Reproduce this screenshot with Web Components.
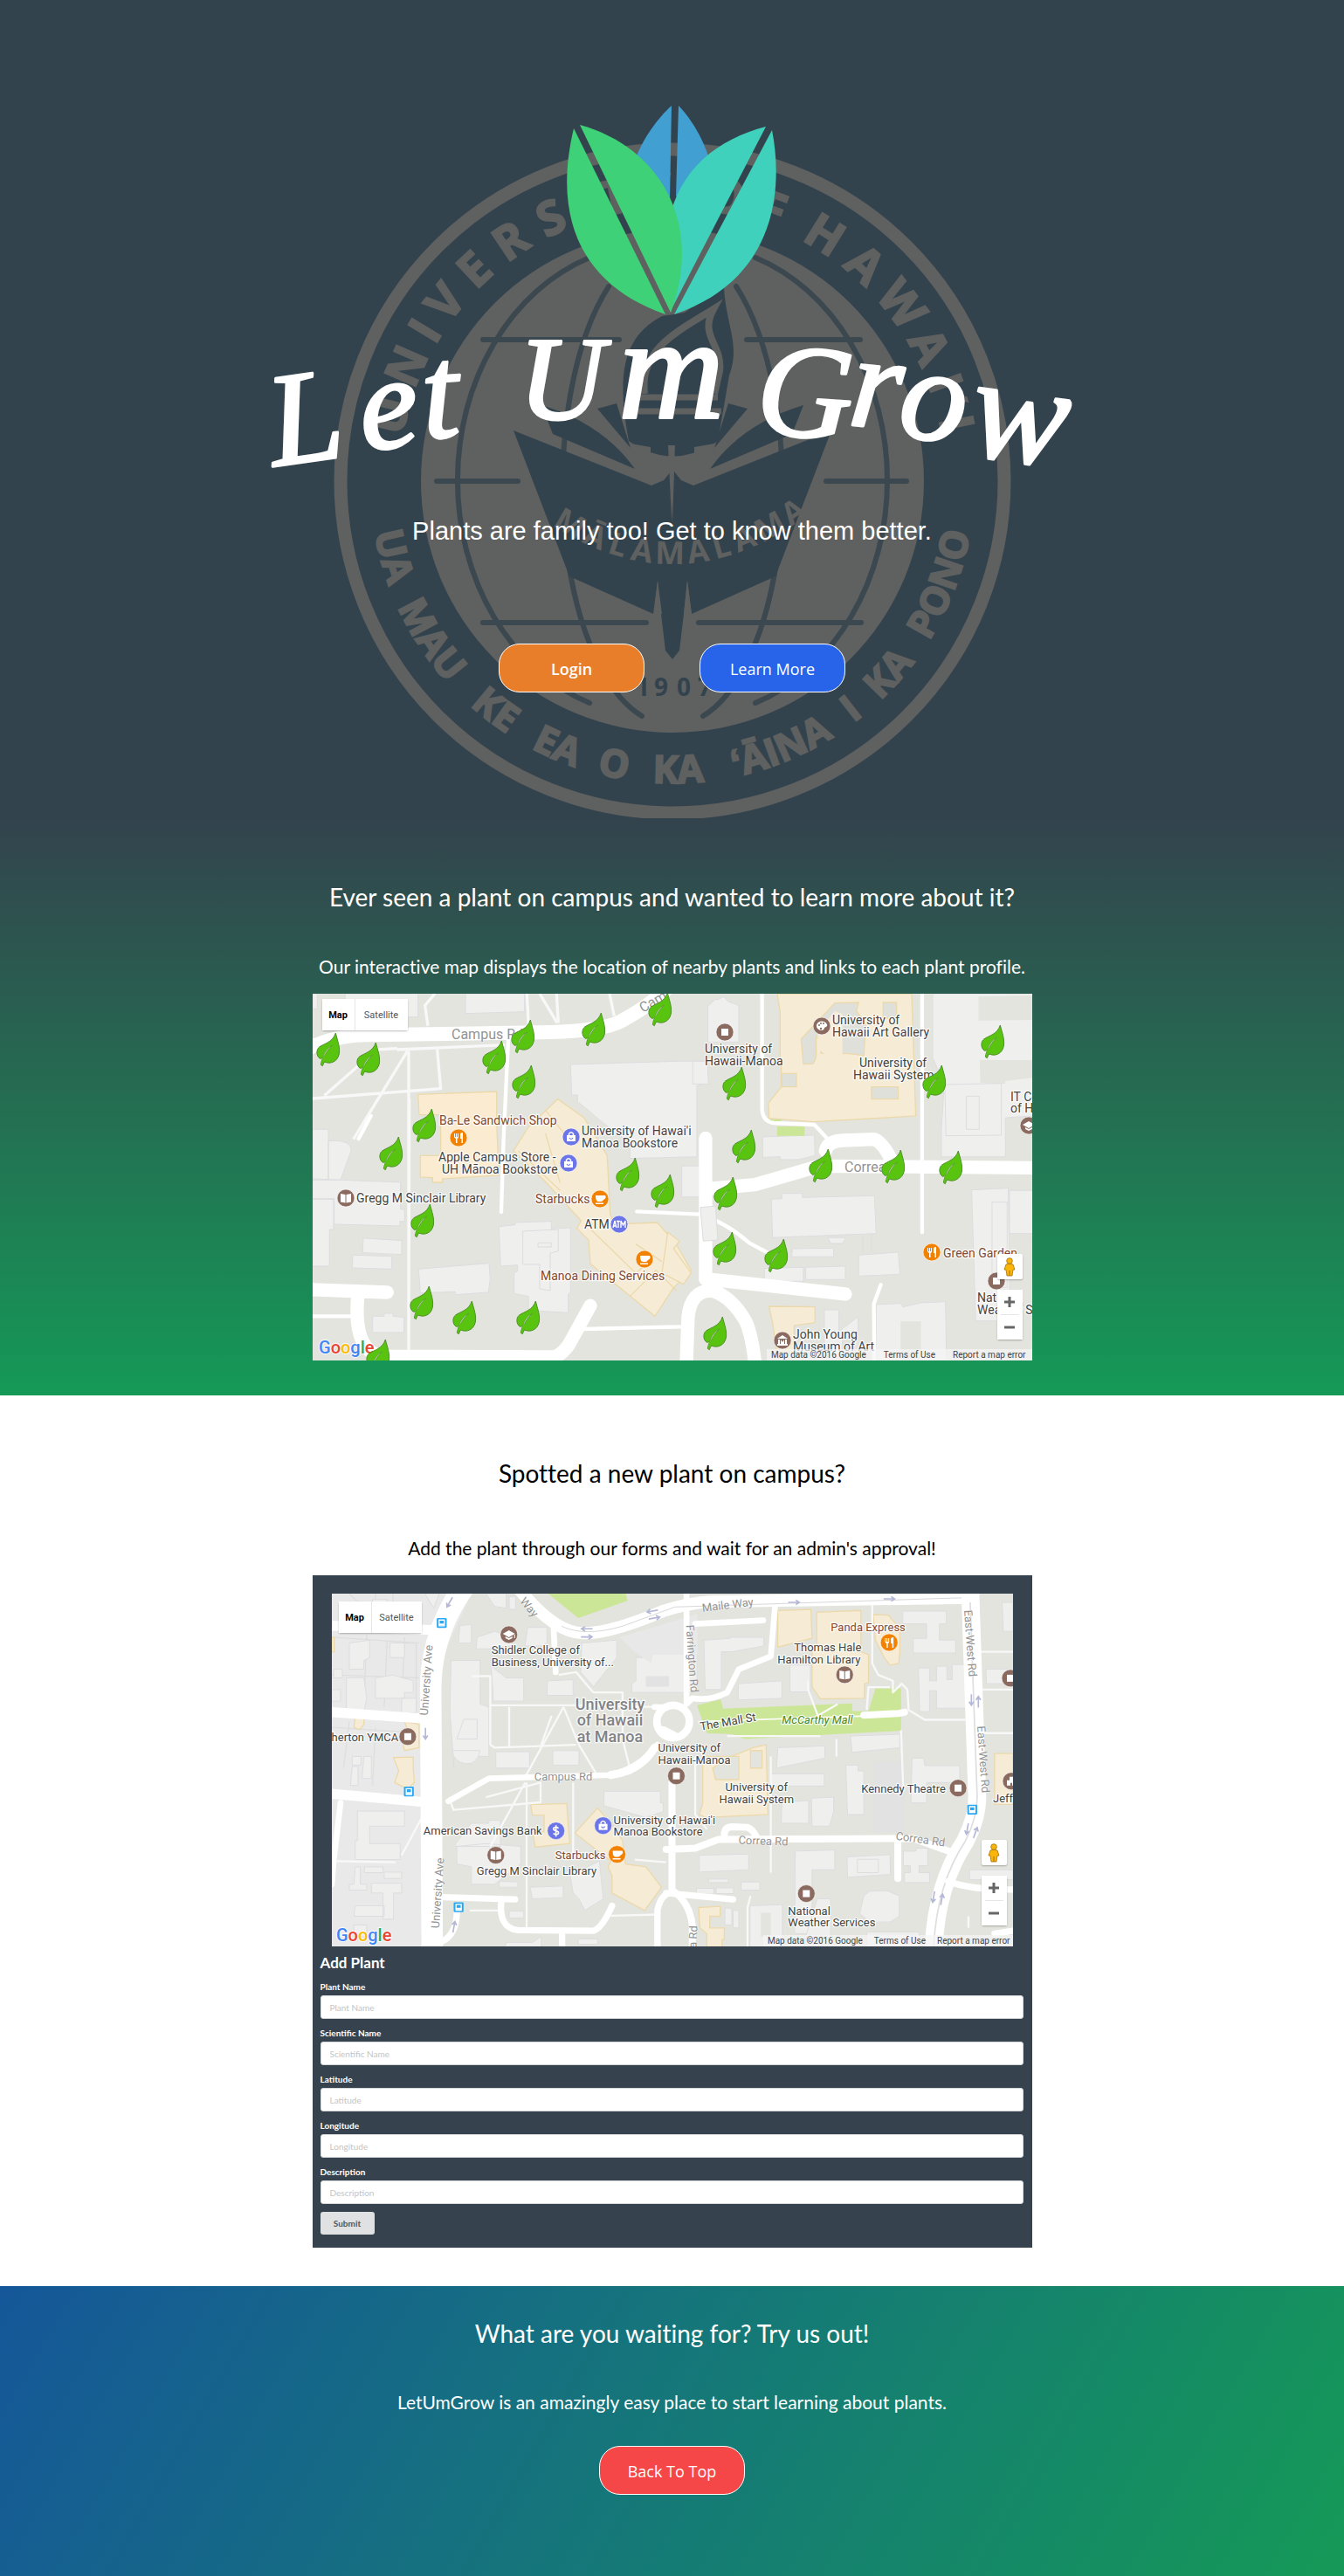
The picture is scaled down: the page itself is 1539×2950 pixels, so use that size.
<!DOCTYPE html>
<html lang="en">
<head>
<meta charset="utf-8">
<meta name="viewport" content="width=device-width, initial-scale=1">
<title>Let Um Grow</title>
<style>
  html { scroll-behavior: smooth; }
  body { margin: 0; font-family: Lato, sans-serif; background: #fff; }
</style>
</head>
<body>
<lug-hero id="top">
  <lug-seal slot="seal"></lug-seal>
  <lug-logo slot="logo"></lug-logo>
  <span slot="tagline">Plants are family too! Get to know them better.</span>
  <lug-button slot="actions" tone="orange" href="#login" strong>Login</lug-button>
  <lug-button slot="actions" tone="blue" href="#more">Learn More</lug-button>
</lug-hero>

<lug-band tone="fade" id="more">
  <span slot="title">Ever seen a plant on campus and wanted to learn more about it?</span>
  <span slot="lead">Our interactive map displays the location of nearby plants and links to each plant profile.</span>
  <plant-map></plant-map>
</lug-band>

<lug-band tone="plain">
  <span slot="title">Spotted a new plant on campus?</span>
  <span slot="lead">Add the plant through our forms and wait for an admin's approval!</span>
  <plant-form></plant-form>
</lug-band>

<lug-band tone="deep">
  <span slot="title">What are you waiting for? Try us out!</span>
  <span slot="lead">LetUmGrow is an amazingly easy place to start learning about plants.</span>
  <lug-button tone="red" href="#top">Back To Top</lug-button>
</lug-band>

<script>
class LugElement extends HTMLElement {
  constructor() {
    super();
    this.attachShadow({ mode: 'open' });
  }
  connectedCallback() {
    this.shadowRoot.innerHTML = this.render();
  }
}

/* Hero: the seal and the content share one grid cell */
customElements.define('lug-hero', class extends LugElement {
  render() {
    return `
    <style>
      :host { display: grid; justify-items: center; background: #33434d; color: #fff; overflow: hidden; }
      .seal, .content { grid-area: 1 / 1; }
      .seal { padding-top: 163px; }
      .content { display: flex; flex-direction: column; align-items: center; padding: 110px 0 144px; }
      h1 { margin: 0; }
      p { margin: 40px 0 111px; font: 29px/36px "Liberation Sans", Arial, sans-serif; text-align: center; }
      .actions { display: flex; gap: 63px; }
    </style>
    <div class="seal"><slot name="seal"></slot></div>
    <div class="content">
      <h1><slot name="logo"></slot></h1>
      <p><slot name="tagline"></slot></p>
      <div class="actions"><slot name="actions"></slot></div>
    </div>`;
  }
});

/* University seal */
customElements.define('lug-seal', class extends LugElement {
  render() {
    const top = [['U',-76.7],['N',-66.5],['I',-58.6],['V',-51.7],['E',-43],['R',-33.8],['S',-24.6],['I',-18],['T',-11.5],['Y',-3],['O',11],['F',20.5],['H',32],['A',42],['W',52.6],['A',62.7],['I',70.5],['ʻ',74.5],['I',78.8]];
    const bottom = [['UA',-75],['MAU',-56.7],['KE',-37.7],['EA',-23.5],['O',-11.7],['KA',1],['ʻĀINA',22],['I',38],['KA',48.3],['PONO',69]];
    const upper = top.map(([t, a]) => `<tspan x="${Math.round((a + 90) * 5.45)}">${t}</tspan>`).join('');
    const lower = bottom.map(([t, a]) => `<tspan x="${Math.round((a + 90) * 6.039)}">${t}</tspan>`).join('');
    const book = `
      <path d="M588 493 L652 660 L748 703 L753 665 L757 703 L762 745 L770 755 V600 L768 540 L760 550 L746 556 Z"/>
      <path d="M620 464 Q690 485 727 537 L633 497Z M684 468 L706 462 L722 513Z"/>`;
    return `
    <style>
      :host { display: block; }
      svg { display: block; width: 776px; max-width: 100vw; height: auto; }
      text { font-family: "Open Sans", sans-serif; font-weight: 700; text-anchor: middle; }
      .ring { fill: #5f6060; stroke: #5f6060; stroke-width: 2; }
    </style>
    <svg viewBox="382 163 776 774" aria-hidden="true">
      <defs>
        <path id="up" d="M457 551 A313 313 0 0 1 1083 551"/>
        <path id="down" d="M424 551 A346 346 0 0 0 1116 551"/>
        <path id="ribbon" d="M618 592 Q770 700 922 592"/>
      </defs>
      <circle cx="770" cy="551" r="380" fill="none" stroke="#5f6060" stroke-width="15"/>
      <circle cx="770" cy="551" r="288" fill="#5f6060"/>
      <g fill="none" stroke="#3b484f" stroke-width="6" stroke-linecap="round">
        <path d="M675 295 A225 270 0 0 0 675 805 M865 295 A225 270 0 0 1 865 805"/>
        <path d="M697 328 A122 275 0 0 0 735 820 M843 328 A122 275 0 0 1 805 820"/>
        <path d="M553 389 H709 M855 389 H985 M500 551 H593 M946 551 H1038 M553 713 H740 M800 713 H986"/>
      </g>
      <g fill="#33434d">
        <path d="M758 362 C715 385 705 425 720 505 Q770 540 822 505 L835 430 C848 395 832 375 829 330 Q800 345 784 358Z"/>
        ${book}
        <g transform="translate(1540 0) scale(-1 1)">${book}</g>
      </g>
      <path d="M738 451 C732 400 775 380 817 354 C800 385 828 395 824 425 L818 451" fill="none" stroke="#5f6060" stroke-width="8"/>
      <path d="M730 455 H822 M722 471 H826" stroke="#5f6060" stroke-width="7"/>
      <path d="M716 478 H824 Q810 505 770 507 Q730 505 716 478Z" fill="#33434d"/>
      <path d="M727 540 L745 553 V512 L722 508Z M813 540 L795 553 V512 L818 508Z" fill="#5f6060"/>
      <path d="M765 510 L769 595 L773 510Z" fill="#5f6060"/>
      <path d="M753 665 L749 703 H758Z M787 665 L783 703 H792Z" fill="#5f6060"/>
      <text class="ring" font-size="54"><textPath href="#up">${upper}</textPath></text>
      <text class="ring" font-size="44"><textPath href="#down">${lower}</textPath></text>
      <text font-size="36" fill="#5f6060"><textPath href="#ribbon"><tspan x="34 68 97 127 161 195 224 253 287 320">MĀLAMALAMA</tspan></textPath></text>
      <text x="736 757 783 807" y="797" font-size="28" fill="#33434d">1907</text>
    </svg>`;
  }
});

/* Leaf mark and lettering */
customElements.define('lug-logo', class extends LugElement {
  render() {
    return `
    <style>
      :host { display: block; }
      svg { display: block; width: 940px; max-width: 100vw; height: auto; }
      text { font: italic 400 152px "Liberation Serif", serif; fill: #fff; stroke: #fff; stroke-width: 3; stroke-linejoin: round; }
      .small { font-size: 136px; }
      .large { font-size: 168px; }
    </style>
    <svg viewBox="300 110 940 440" role="img" aria-label="Let Um Grow">
      <g fill="#419fd1">
        <path d="M769 121 C745 143 722 180 718 220 L767 230Z"/>
        <path d="M777 121 C800 145 811 175 816 195 L774 225Z"/>
      </g>
      <g fill="#3fd1bb">
        <path d="M877 145 C800 165 740 225 770 352Z"/>
        <path d="M884 149 C897 215 890 320 772 360Z"/>
      </g>
      <g fill="#3fd178">
        <path d="M664 143 C760 170 805 260 768 358Z"/>
        <path d="M657 147 C630 260 675 330 762 360Z"/>
      </g>
      <text x="314 416 486" y="534 516 502" rotate="-8 -6 -4">Let</text>
      <text x="594 708" y="480 478"><tspan class="small">U</tspan><tspan class="large">m</tspan></text>
      <text x="864 970 1026 1106" y="496 486 498 520" rotate="4 6 8 8">Gro<tspan class="large">w</tspan></text>
    </svg>`;
  }
});

customElements.define('lug-button', class extends LugElement {
  render() {
    return `
    <style>
      :host { display: inline-block; }
      a { display: block; box-sizing: border-box; width: 167px; height: 56px; padding-top: 2px; border: 1px solid #fff;
          border-radius: 24px; color: #fff; text-align: center; text-decoration: none;
          font: 18px/52px "Open Sans", sans-serif; }
      :host([strong]) a { font-weight: 600; }
      :host([tone="orange"]) a { background: #e87e29; }
      :host([tone="blue"]) a { background: #2764ea; }
      :host([tone="red"]) a { background: #f54748; }
    </style>
    <a href="${this.getAttribute('href')}"><slot></slot></a>`;
  }
});

/* Full-width band with a centred column */
customElements.define('lug-band', class extends LugElement {
  render() {
    return `
    <style>
      :host { display: flex; flex-direction: column; align-items: center; text-align: center; font-variant-ligatures: none; }
      :host([tone="fade"]) { --gap: 48px; padding: 72px 16px 40px; color: #fff; background: linear-gradient(#33434d, #159957); }
      :host([tone="plain"]) { --gap: 54px; padding: 71px 16px 44px; color: #000; background: #fff; }
      :host([tone="deep"]) { --gap: 47px; --after: 36px; padding: 36px 16px 93px; color: #fff; background: linear-gradient(120deg, #155799, #159957); }
      h2 { margin: 0; font-weight: 400; font-size: 28px; line-height: 36px; }
      p { margin: var(--gap) 0 var(--after, 17px); font-size: 21px; line-height: 28px; }
      .body { width: 100%; max-width: 824px; }
    </style>
    <h2><slot name="title"></slot></h2>
    <p><slot name="lead"></slot></p>
    <div class="body"><slot></slot></div>`;
  }
});

/* Map frame: drawing in the slot, controls over it */
customElements.define('map-frame', class extends LugElement {
  render() {
    return `
    <style>
      :host { display: block; position: relative; overflow: hidden; background: #e3e4dd; font-family: Roboto, sans-serif; text-align: left; }
      button { border: 0; padding: 0; background: #fff; font-family: inherit; cursor: pointer; color: #565656; }
      .types, .side { position: absolute; display: flex; }
      .types { left: var(--tx, 11px); top: var(--ty, 6px); height: 36px; border-radius: 2px; box-shadow: 0 1px 2px #0004; }
      .types button { width: var(--tw, 60px); font-size: 11px; }
      .types button:first-child { width: 38px; font-weight: 700; color: #000; border-right: 1px solid #e6e6e6; }
      .side { right: var(--sx, 11px); bottom: 24px; flex-direction: column; gap: 12px; }
      .side > * { width: 29px; border-radius: 2px; box-shadow: 0 1px 2px #0004; }
      .peg { height: 29px; display: grid; place-items: center; }
      .zoom { display: flex; flex-direction: column; background: #fff; }
      .zoom button { height: 28px; display: grid; place-items: center; }
      .zoom hr { margin: 0 4px; width: auto; border: 0; border-top: 1px solid #e6e6e6; }
      footer { position: absolute; right: 0; bottom: 0; display: flex; gap: var(--fg, 20px); padding: 0 var(--fp, 7px) 0 5px; height: 13px;
               background: #f5f5f5b3; font-size: 10px; line-height: 13px; color: #444; }
      a { color: inherit; text-decoration: none; }
    </style>
    <slot></slot>
    <div class="types"><button type="button">Map</button><button type="button">Satellite</button></div>
    <div class="side">
      <button class="peg" type="button" aria-label="Street View">
        <svg width="14" height="22" viewBox="0 0 14 22"><g fill="#f9b509" stroke="#a87108" stroke-width=".8"><path d="M3 8 Q7 6.500 11 8 L13 14 H11 L10 21 H4 L3 14 H1Z"/><circle cx="7" cy="4" r="3.300"/></g><path d="M7 15 V21" stroke="#a87108"/></svg>
      </button>
      <div class="zoom">
        <button type="button" aria-label="Zoom in"><svg width="12" height="12"><path d="M0 6H12M6 0V12" stroke="#666" stroke-width="3"/></svg></button>
        <hr>
        <button type="button" aria-label="Zoom out"><svg width="12" height="12"><path d="M0 6H12" stroke="#666" stroke-width="3"/></svg></button>
      </div>
    </div>
    <footer><span>Map data ©2016 Google</span><a href="#">Terms of Use</a><a href="#">Report a map error</a></footer>`;
  }
});

const MAP_STYLE = `
  :host { display: block; }
  svg { display: block; width: 100%; height: auto; font-family: Roboto, sans-serif; }
  text { paint-order: stroke; stroke: #ffffffd0; stroke-width: 2.5px; stroke-linejoin: round; font-size: var(--label, 14px); fill: #444; }
  .food { fill: #84492f; }
  .road { fill: #939393; font-size: var(--road, 16px); stroke-width: 1px; }
  .place { fill: #7f8388; font-size: 18px; font-weight: 500; }
  .park { fill: #4c8a1c; font-style: italic; }
  .r { fill: none; stroke: #fff; stroke-linejoin: round; stroke-linecap: round; }
  .t { fill: none; stroke: #f8f8f8; stroke-width: 10; stroke-linejoin: round; }
  .b { fill: #efefee; stroke: #dddde0; stroke-width: 3; }
  .y { fill: #f6ecd6; stroke: #ecd9ab; stroke-width: 4; }
  .g { fill: #cbe697; }
  .google { font-size: 20px; font-weight: 500; stroke-width: 2px; }`;

const GLYPHS = {
  dot: ['#8b6a60', '<rect x="-4" y="-4" width="8" height="8" fill="#fff"/>'],
  book: ['#8b6a60', '<path d="M-6-5 L-.500-4 V5.500 L-6 4.500Z M6-5 L.500-4 V5.500 L6 4.500Z" fill="#fff"/>'],
  art: ['#8b6a60', '<path d="M-6 1 C-7-6 3-8 6-2 C7 1 4 1 3 2 C3 6-4 6-6 1Z" fill="#fff"/><g fill="#8b6a60"><circle cx="-3" cy="-1" r="1"/><circle cx="-1" cy="-3" r="1"/><circle cx="2" cy="-3" r="1"/><circle cx="-1" cy="3" r="1.200"/></g>'],
  school: ['#8b6a60', '<path d="M-7-1 L0-5 L7-1 L0 3Z M-4 2 L0 4 L4 2 V4 L0 6 L-4 4Z M6 0V4H7V0Z" fill="#fff"/>'],
  museum: ['#8b6a60', '<path d="M-6-2 L0-6 L6-2Z M-6 4H6V6H-6Z M-5-1H-3V4H-5Z M3-1H5V4H3Z M-2 4V-1L0 2L2-1V4" fill="#fff"/>'],
  castle: ['#8b6a60', '<path d="M-5 5V-1H-2V-5H2V-3H5V5H1V2H-1V5Z" fill="#fff"/>'],
  food: ['#f28100', '<path d="M-5-5V-1Q-4 1-3 1V6H-1.500V1Q0 1 0-1V-5H-1V-1H-2V-5H-3V-1H-4V-5Z M2-4Q2-6 5-6V6H3.500V1H2Z" fill="#fff"/>'],
  cup: ['#f28100', '<path d="M-5-4H6Q8-1 4 1Q3 3 1 3H-2Q-5 3-5-4Z M-5 4.500H4V6H-5Z" fill="#fff"/>'],
  shop: ['#6b75e8', '<path d="M-5-2H5V5H-5Z" fill="#fff"/><path d="M-2.500-2V-3.500Q0-7 2.500-3.500V-2" fill="none" stroke="#fff" stroke-width="1.500"/><path d="M-2 1Q0 4 2 1" fill="none" stroke="#6b75e8" stroke-width="1.200"/>'],
  atm: ['#6b75e8', '<path d="M-7 4L-5-4L-3 4M-6.500 2H-3.500M-3-3.500H1M-1-4V4M2 4V-4L4.500 1L7-4V4" fill="none" stroke="#fff" stroke-width="1.400"/>'],
  bank: ['#6b75e8', '<path d="M3-3Q0-5-2.500-3.500Q-4-1 0 0Q4 1 2.500 3.500Q0 5-3 3M0-6.500V6.500" fill="none" stroke="#fff" stroke-width="1.700"/>']
};
const px = n => Math.round(n / 3);
/* Both maps are charted on a grid of three units to a pixel */
const poi = ([kind, x, y]) => `<g transform="translate(${px(x)} ${px(y)})"><circle r="10" fill="${GLYPHS[kind][0]}" stroke="#ffffff90"/>${GLYPHS[kind][1]}</g>`;
const label = ([text, x, y, kind = '', turn = 0]) => `<text class="${kind}" transform="translate(${px(x)} ${px(y)}) rotate(${turn})">${text}</text>`;
const google = (x, y) => `<text class="google" x="${x}" y="${y}"><tspan fill="#4285f4">G</tspan><tspan fill="#ea4335">o</tspan><tspan fill="#fbbc05">o</tspan><tspan fill="#4285f4">g</tspan><tspan fill="#34a853">l</tspan><tspan fill="#ea4335">e</tspan></text>`;
const leaf = ([x, y]) => `<g transform="translate(${px(x)} ${px(y)}) scale(.3333)"><path d="M64 0 C70 25 80 48 76 72 C70 100 45 108 26 99 Q22 104 19 113 L13 109 Q15 96 20 86 L10 88 C-4 78-3 56 8 48 C25 36 54 32 64 0Z" fill="#59c40f" stroke="#4f8f2c" stroke-width="3"/><path d="M17 106 Q22 70 53 42 Q28 56 20 84Z" fill="#e3e4dd" stroke="#4f8f2c" stroke-width="2"/><path d="M16 109 Q18 94 25 80" stroke="#59c40f" stroke-width="5" fill="none"/></g>`;

customElements.define('plant-map', class extends LugElement {
  render() {
    const leaves = [[16,134],[154,169],[586,163],[685,89],[688,246],[928,67],[1155,-4],[344,397],[1411,253],[2096,246],[2297,108],
      [231,493],[340,724],[337,1004],[483,1055],[701,1055],[187,1187],[1043,564],[1164,621],
      [1443,468],[1381,631],[1376,819],[1555,844],[1708,535],[1955,537],[2153,541],[1344,1110]];
    const labels = [['Campus Rd',477,156,'road'],['Cam',1135,66,'road',-30],['Ba-Le Sandwich Shop',436,451,'food'],
      ['University of',1348,204],['Hawaii-Manoa',1348,246],['University of',1786,105],['Hawaii Art Gallery',1786,147],
      ['University of',1878,252],['Hawaii System',1856,294],['IT Center',2396,368],['of Hawaii',2396,409],
      ['Apple Campus Store -',431,576],['UH Mānoa Bookstore',445,618],["University of Hawai'i",925,486],['Manoa Bookstore',925,528],
      ['Gregg M Sinclair Library',151,717],['Starbucks',766,719,'food'],['ATM',932,807],['Manoa Dining Services',784,985,'food'],
      ['Correa',1826,612,'road'],['Green Garden',2166,905,'food'],['National',2284,1058],['Weather Services',2284,1100],
      ['John Young',1651,1186],['Museum of Art',1651,1226]];
    const pois = [['dot',1416,133],['art',1748,111],['school',2460,453],['food',501,496],['shop',878,582],['shop',887,492],
      ['book',114,703],['cup',986,704],['atm',1053,793],['cup',1139,911],['food',2128,889],['dot',2348,988],['museum',1613,1192]];
    return `
    <style>${MAP_STYLE}</style>
    <map-frame>
      <svg viewBox="0 0 824 420">
        <g transform="scale(.3333)">
          <path class="b" d="M0 0H16V52H0Z M112 0H362V80H112Z M525 0H728V62L525 68Z"/>
          <path class="b" d="M886 243L1248 232L1344 232V310L1320 316V560L1090 566V510L1030 470L910 370V348H890Z"/>
          <path class="b" d="M2130 0H2480V420L2380 426V560H2160V470L2170 310L2130 220V100Z M1356 232H1306V310H1360Z"/>
          <path d="M2288 10L2480 6V90L2288 92Z M2292 228H2480V288L2380 300V310L2294 306Z" fill="#e3e4dd"/>
          <path class="b" d="M2172 312L2366 308V486L2176 488Z M2246 352H2290V466H2246Z"/>
          <path class="b" d="M0 466H54V640H0Z M54 506Q135 500 132 540L96 640H54Z M0 636L302 648V740L316 742V782H300V798L74 792V704H0Z M0 706H72V810H58V936H0Z M174 840L306 848V896L172 890Z M138 898L272 902V946L136 942Z"/>
          <path class="b" d="M364 946L606 926L610 980L604 1026L490 1034V1024L370 1028Z M206 1108H246V1098H276V1108L314 1112V1164H206Z"/>
          <path class="b" d="M640 800L696 794V786L820 782V808L886 804V1026L878 1032V1096L742 1088V1040L692 1030V958L704 954V932L646 936Z M722 816L844 810V884L816 892V1020L780 1014V930H722Z M774 856H820V870H774Z"/>
          <path class="b" d="M1576 706L1612 704V686H1682V700L1930 694L1936 824L1580 838Z M1546 492L1724 486L1726 556L1668 570H1606V560L1546 562Z M1268 592H1330V698H1268Z M1334 734L1384 730L1392 846L1342 850Z"/>
          <path class="b" d="M1648 876L1790 874V904H1646Z M1552 944L1686 940V988H1552Z M1694 940L1830 936V982H1694Z M1770 838H1832L1820 858H1780Z M1876 898L2012 888L2018 964L1876 970Z M1890 830V890M1920 826V888"/>
          <path class="b" d="M1936 1068L2020 1064L2028 1076L2090 1062L2174 1058L2178 1260H1936Z M1758 1086H1808V1160L1874 1110V1168H1820V1240H1758Z M2264 674L2390 668L2396 1124H2278Z M2394 676H2480V824H2394Z M2334 716H2386V1010H2334Z"/>
          <path d="M2020 1126H2090V1260H2020Z" fill="#e3e4dd"/>
          <path class="b" d="M1358 44L1382 20H1394L1412 10L1426 26L1464 40V166H1358Z"/>
          <path class="y" d="M1596 0L2058 0L2072 420L1720 440L1568 428L1566 376L1610 320V240H1606V60Z"/>
          <path d="M1678 156L1794 32L1876 30L1868 60L1900 100L1894 212L1842 206L1746 204V160L1730 148V216L1720 240L1686 242Z" fill="#dfe0da" stroke="#ecd9ab" stroke-width="4"/>
          <path d="M1960 30H2006V84H1960Z M1920 320H2012V362H1920Z M1612 274H1662V320H1612Z" fill="#dfe0da" stroke="#ecd9ab" stroke-width="4"/>
          <path d="M1736 130L1794 60L1820 70V208H1760L1736 190Z" fill="#f6ecd6"/>
          <path class="g" d="M1596 456H1690V488H1596Z M1570 432H1610V440H1570Z"/>
          <path class="y" style="fill:#fbecd1" d="M362 346L632 336V440L640 624L446 636V648H412V632L370 630V556H440V416H366Z"/>
          <path class="y" d="M842 362L932 426L1012 556L1022 756L1036 792L1184 786L1250 862L1300 950L1240 1010L1176 1108L954 928L948 846L908 806L922 780L800 646L690 540L740 460Z"/>
          <path d="M706 540L850 676M800 400L880 500M800 480L850 650M956 810L1110 960L1170 910M1090 1040L1180 950L1250 1020M1110 860L1200 920" fill="none" stroke="#ecd9ab" stroke-width="4"/>
          <path class="y" d="M1220 820L1260 850L1240 876L1300 960L1274 998L1200 960Z M1568 1074L1726 1076V1130L1654 1140V1230H1594L1580 1130Z"/>
          <path class="t" d="M420 0L386 40L396 110M736 0L742 110M780 0L840 100M838 0L844 100M1020 0L1036 76M40 350L220 192L290 188M330 186V1240L332 360M330 190L140 500M0 360L440 326L428 192M290 192L660 176"/>
          <path class="r" stroke-width="13" d="M672 160L656 500L648 750M158 498L200 420M1114 748L1330 758Q1420 786 1500 856L1560 888M930 1152L1268 1144M0 1108H130M1930 1260L1928 1066L1952 1000"/>
          <path class="r" stroke-width="13" d="M1544 0V400Q1548 440 1584 444L1724 450L1770 500M2094 0V820"/>
          <path class="r" stroke-width="48" d="M-20 190Q80 140 200 142L820 132Q1000 126 1060 94Q1160 40 1220-20"/>
          <path class="r" stroke-width="46" d="M1350 496V980M1360 670L1520 656L1740 592L2480 598M1762 540Q1770 506 1820 504L1930 500Q1960 510 1998 590"/>
          <path class="r" stroke-width="46" d="M1350 980L1830 1032M1284 1270L1290 1110Q1300 1020 1370 1020Q1440 1040 1490 1130Q1510 1180 1520 1270M-20 1016L256 1026M156 1030Q136 1230 240 1246L820 1248Q850 1248 880 1206L954 1072"/>
          <path class="b" d="M1332 734L1384 730L1392 846L1342 850Z"/>
        </g>
        ${pois.map(poi).join('')}
        ${labels.map(label).join('')}
        ${google(7, 412)}
        ${leaves.map(leaf).join('')}
      </svg>
    </map-frame>`;
  }
});

customElements.define('picker-map', class extends LugElement {
  render() {
    const labels = [['University Ave',331,420,'road',-86],['Way',645,28,'road',50],['Maile Way',1275,62,'road',-7],['Farrington Rd',1218,108,'road',86],
      ['East-West Rd',2174,58,'road',86],['East-West Rd',2220,456,'road',86],['University Ave',370,1152,'road',-86],['Campus Rd',695,641,'road'],
      ['Correa Rd',1398,860,'road',2],['Correa Rd',1938,846,'road',8],['Correa Rd',1250,1314,'road',-88],
      ['Shidler College of',549,208],['Business, University of...',549,249],['University',836,398,'place'],['of Hawaii',842,453,'place'],['at Manoa',842,509,'place'],
      ['Atherton YMCA',-38,507],['University of',1123,544],['Hawaii-Manoa',1123,584],['Panda Express',1716,130,'food'],
      ['Thomas Hale',1591,198],['Hamilton Library',1532,239],['The Mall St',1270,472,'',-10],['McCarthy Mall',1548,447,'park'],
      ['University of',1352,679],['Hawaii System',1331,719],['Kennedy Theatre',1820,684],['Jefferson',2273,717],
      ['American Savings Bank',316,829],["University of Hawai'i",970,792],['Manoa Bookstore',970,832],['Starbucks',768,911,'food'],
      ['Gregg M Sinclair Library',499,966],['National',1570,1104],['Weather Services',1570,1145]];
    const pois = [['school',610,140],['dot',262,492],['food',1916,168],['book',1763,278],['dot',2334,290],['dot',1185,626],['dot',2154,669],['castle',2336,645],
      ['bank',770,816],['shop',934,798],['cup',980,898],['book',564,899],['dot',1631,1033]];
    const buses = [[378,101],[265,681],[2203,743],[436,1079]];
    const arrow = (x, y, a) => `<path transform="translate(${x} ${y}) rotate(${a})" d="M-20 0H18M6-8L18 0L6 8" fill="none" stroke="#b4b8d6" stroke-width="5"/>`;
    return `
    <style>${MAP_STYLE}</style>
    <map-frame>
      <svg viewBox="0 0 781 405">
        <g transform="scale(.3333)">
          <path d="M0 0H480L370 240V1215H0Z" fill="#e9e9e9"/>
          <path class="t" style="stroke:#dedede;stroke-width:4" d="M60 0L100 40M150 0V30M210 0V40M0 150L300 170M120 140L110 400M190 160L180 390M0 280L300 290M250 150L240 400M0 460L310 480M60 440L40 600M150 460L140 660M0 700L300 720M240 170H290V420"/>
          <path class="b" d="M60 170L130 160V220L110 230V260H60Z M200 170H250V220H200Z M6 260H36V290H6Z M50 290H110L120 360L110 410H50Z M150 290L210 280L280 300V340H250V360H150Z M0 330H30V370H0Z M240 360H290V410H240Z M140 20H190V60H140Z M320 0H370L350 50Z"/>
          <path class="b" d="M70 560H100V590H70Z M70 595H90V660H64Z M110 560H136V636H104Z M88 748H250V800H130V860H235V915H80V850H88Z M80 940H98V1000H120V1020H60V1000H76Z M112 940H176V960H112Z M180 958H240V980H180Z M136 996H240V1030H212V1120H176V1030H136Z M80 1074H180V1110H76Z M76 1140H120V1180H76Z"/>
          <path class="b" d="M530 0H600V50L560 44Z M610 10H632V54H610Z M440 110L480 106V170H436Z M500 150L560 130L620 150V180L540 190H496Z M674 116H740V170L720 180H664Z M860 170L980 160V220L900 320L856 270Z M410 230H510V380L540 390V560H420V600L406 400Z M454 432H500V500H430Z M548 250L600 290H660V370H556Z M742 300L830 296V350H740Z"/>
          <path class="b" d="M1046 220H1100V200H1256V340H1100L1032 340V310L1046 300Z M414 540H510Q500 590 460 585Q420 580 414 540Z M564 544H680V600H564Z M760 540H850V590H760Z M936 680H1130V720H1140V750L1080 770L936 730Z M480 790H540V780H580V870H430V870H426V860Z M430 870L530 860L650 870V930L560 1000H480V940L430 930Z M576 990L640 992V1010H576Z M682 1010L796 1006V1046L690 1050Z M610 1092H660V1116H610Z M820 970L920 920L934 1050L870 1090L850 1050L830 1030Z M600 1200H690L720 1180V1215H596Z M848 1188H914V1206H848Z"/>
          <path d="M990 150L1258 70V210H1100V240L1040 200Z" fill="#e8e8e8"/>
          <path d="M1080 284H1160V320H1080Z M1864 580L1970 576V820H1860Z" fill="#e2e2e2"/>
          <path class="b" d="M1280 160L1370 154V150H1486V180L1376 200H1340V330H1284Z M1576 246H1646V338H1576Z M1398 310L1548 300V360L1398 366Z M1964 60H2114V104H2090V160H2146V204H2000V154H2046V104H1964Z M2018 256H2056V300H2080V250H2116V296H2134V244H2180V394H2080V334H2056V406H2022Z M2250 260H2343V310H2252Z M2306 30H2343V130H2310Z"/>
          <path class="b" d="M1534 530L1696 524V566L1530 600Z M1784 490L1954 484V530L1790 546Z M1510 620H1694V662H1510Z M1548 718L1640 712V790H1546Z M1650 704L1726 700V750L1712 800H1652Z M1768 590H1810V610H1830V760H1774Z M1996 566H2036L2040 592H2160V650H2046V720H1992Z M1264 900L1434 896V950L1264 958Z M1254 1014H1314V1034H1254Z M1322 1012H1382V1032H1322Z M1408 992H1472V1020H1408Z M1296 982H1364V994H1296Z M1594 886L1730 882V950H1652V1170H1592Z"/>
          <path class="b" d="M1772 906L1920 898L1922 966L1774 976Z M1808 914H1880V960H1808Z M1966 886H2010V876H2050V936H2020V960H2056V994H1970V960H1990V936H1966Z M1830 1040L1850 1024L1910 1022L1952 1040V1110L1920 1130H1850L1816 1100Z M1438 1074L1550 1070V1215H1438Z M1352 1082H1376V1140H1352Z M1380 1090H1400V1150H1380Z M1670 1050H1716V1180H1630Z M1840 1164H2020V1215H1840Z M2194 950H2343V984H2194Z"/>
          <path d="M1476 1098H1510V1180H1476Z" fill="#e3e4dd"/>
          <path class="g" d="M744 0H1010L1018 24L848 84Z M1256 384L1338 364L1346 396L1790 378V404H1846L1870 326H1958V472L1420 500L1380 484L1290 480Z"/>
          <path d="M1260 440L1860 420" fill="none" stroke="#fff" stroke-width="5"/>
          <path class="y" d="M1534 58L1648 54L1652 154L1534 184Z M1668 64L1820 58V200L1846 210V306L1832 310V360L1680 362L1652 320V180H1668Z M1862 72L1914 74L1954 120V200L1950 240L1920 246L1900 220L1870 160Z"/>
          <path class="y" d="M80 420L110 418V450L96 468L76 460Z M250 440L300 450V530L250 540L240 500H270Z M212 564L280 562V600L284 650L260 672L216 650L230 610Z M0 150H8V200H0Z"/>
          <path class="y" d="M1276 560H1376L1450 530L1494 520L1500 760L1286 770L1264 760L1276 720Z M2280 550H2343V725H2280Z M684 726L808 722L818 860L700 872L690 820H730V762H690Z M914 738L960 790L1000 850L1010 930L1080 940L1134 1010L1076 1090L964 1030V970L950 940L960 920L836 824Z M1262 1080L1336 1076V1110H1300V1150H1350V1190H1342V1215H1290V1170L1266 1150Z"/>
          <path d="M1310 600L1370 560H1400V640H1320ZM1440 540H1480V600H1440Z" fill="#e3e4dd" stroke="#ecd9ab" stroke-width="4"/>
          <path class="t" style="stroke-width:7" d="M482 284H545V520L560 530L840 520M545 384H860L1120 390M797 390L850 520L910 620M797 390L660 640M756 420L720 520M610 390V530M780 280L840 270L900 340L1000 340V500L1030 620M670 650V1150M410 720L418 744L718 718V650L530 700M830 650V900M665 650L545 870M1510 560V960M1250 560V760L1290 810M1042 915L1150 924M960 1108L1120 1104M474 1090H580M1859 0V240L1880 280L1930 300V340L1960 310L1980 330L1984 400L2040 434H2190M1638 300V330L1672 420L1740 380M2210 200H2343M2210 330H2343M2210 480H2343M1958 470L1966 680M1840 400L1846 322H1920M2190 1150V1110M1430 1215V1080L1440 1040M1360 490H1680M1736 500V560M0 920L220 924M240 900L310 770"/>
          <path class="r" stroke-width="34" d="M-10 110L340 125M-10 407L320 430M-10 688L350 720"/>
          <path class="r" stroke-width="22" d="M380 1044L630 1052M584 1050Q570 1150 640 1158L900 1160Q930 1150 964 1074M792 1160V1220M1120 1215V1090Q1130 1040 1160 1030M1150 1030L1380 1052"/>
          <path class="r" stroke-width="20" d="M30 720L6 920L0 1000M401 714L540 636Q660 632 960 624Q1060 600 1120 520M1110 390Q1190 390 1200 410M762 100L770 270M1220 0V380L1240 360Q1300 370 1360 340L1400 260L1510 216L1524 50M1250 104L1484 92"/>
          <path class="r" stroke-width="24" d="M1150 880L1250 876L1330 846L2000 842L2160 900M1350 830Q1350 802 1380 802L1430 804Q1450 812 1462 840M1947 850V980M1170 650V1020Q1230 1060 1240 1140V1215M1970 408L1950 412L1830 418"/>
          <circle cx="1174" cy="440" r="56" fill="#e3e4dd" stroke="#fff" stroke-width="26"/>
          <path class="r" stroke-width="28" d="M1110 530Q1060 610 960 624M1180 490L1140 470"/>
          <path class="r" stroke-width="42" d="M640-20Q770 140 870 136Q960 136 1140 60Q1220 34 1300 28L2200 14"/>
          <path d="M790 112Q870 150 1000 112L1180 46L2180 14" fill="none" stroke="#d8d8d8" stroke-width="3"/>
          <path class="r" stroke-width="74" d="M452-20Q340 140 340 330L345 1215"/>
          <path class="r" stroke-width="62" d="M2196-10L2220 700Q2220 770 2180 850Q2080 1000 2070 1220"/>
          <path d="M2196 30L2220 700Q2220 770 2180 850Q2080 1000 2070 1220" fill="none" stroke="#dedee0" stroke-width="5"/>
          <path class="r" stroke-width="22" d="M2120 990Q2200 1020 2343 1018M370 1200Q430 1180 430 1090M2280 1170L2343 1160"/>
          ${arrow(405, 30, 120)}${arrow(322, 482, 90)}${arrow(877, 121, 180)}${arrow(877, 149, 0)}${arrow(1102, 60, 170)}${arrow(1110, 84, -10)}${arrow(1590, 30, 0)}${arrow(1918, 18, 0)}${arrow(2200, 366, 90)}${arrow(2224, 372, -90)}${arrow(2186, 810, 100)}${arrow(2214, 822, -70)}${arrow(2070, 1044, 100)}${arrow(2098, 1052, -80)}${arrow(420, 1146, -80)}
          ${buses.map(([x, y]) => `<g transform="translate(${x} ${y})"><rect x="-17" y="-17" width="34" height="34" rx="4" fill="#29a8f5"/><path d="M-9-10H9V10H-9Z" fill="none" stroke="#fff" stroke-width="4"/><path d="M-9 2H9V8H-9Z" fill="#fff"/></g>`).join('')}
        </g>
        ${pois.map(poi).join('')}
        ${labels.map(label).join('')}
        ${google(5, 399)}
      </svg>
    </map-frame>`;
  }
});

customElements.define('plant-field', class extends LugElement {
  render() {
    const name = this.getAttribute('name');
    return `
    <style>
      :host { display: flex; flex-direction: column; gap: 3px; }
      label { font: 700 10px/14px Lato, sans-serif; color: #fff; }
      input { box-sizing: border-box; width: 100%; height: 27px; padding: 0 10px; border: 1px solid #d5d8db; border-radius: 3px;
              background: #fff; font: 10px/14px Lato, sans-serif; color: #333; }
      input::placeholder { color: #c4c4c4; opacity: 1; }
    </style>
    <label for="field">${name}</label>
    <input id="field" type="text" placeholder="${name}">`;
  }
});

customElements.define('plant-form', class extends LugElement {
  render() {
    return `
    <style>
      :host { display: block; background: #36434e; text-align: left; }
      picker-map { display: block; padding: 21px 22px 0; --tx: 8px; --ty: 9px; --tw: 57px; --sx: 7px; --fg: 13px; --fp: 3px; --label: 13px; --road: 13px; }
      form { display: flex; flex-direction: column; gap: 9px; padding: 7px 10px 15px 9px; }
      h3 { margin: 0 0 -1px; font: 700 17px/24px Lato, sans-serif; color: #fff; }
      button { align-self: flex-start; width: 62px; height: 26px; padding: 0; border: 0; border-radius: 3px; background: #e0e1e2;
               font: 700 10px/26px Lato, sans-serif; color: #555; }
    </style>
    <picker-map></picker-map>
    <form>
      <h3>Add Plant</h3>
      <plant-field name="Plant Name"></plant-field>
      <plant-field name="Scientific Name"></plant-field>
      <plant-field name="Latitude"></plant-field>
      <plant-field name="Longitude"></plant-field>
      <plant-field name="Description"></plant-field>
      <button type="button">Submit</button>
    </form>`;
  }
});
</script>
</body>
</html>
